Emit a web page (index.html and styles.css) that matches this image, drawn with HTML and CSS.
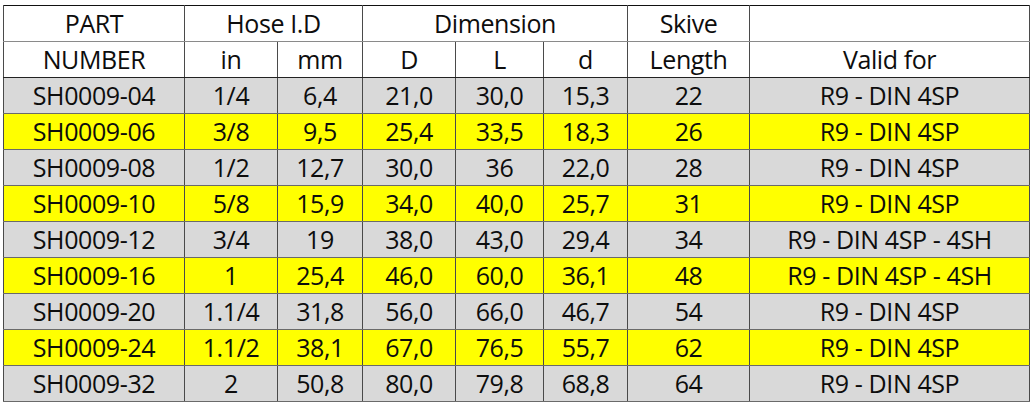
FILE: index.html
```html
<!DOCTYPE html>
<html lang="en">

<head>
    <meta charset="UTF-8">
    <title>SH0009 skive fittings</title>
    <link rel="stylesheet" href="styles.css">
</head>

<body>
    <table class="parts">
        <colgroup>
            <col class="c-part">
            <col class="c-in">
            <col class="c-mm">
            <col class="c-D">
            <col class="c-L">
            <col class="c-d">
            <col class="c-skive">
            <col class="c-valid">
        </colgroup>
        <thead>
            <tr>
                <th>PART</th>
                <th colspan="2">Hose I.D</th>
                <th colspan="3">Dimension</th>
                <th>Skive</th>
                <th></th>
            </tr>
            <tr class="head-last">
                <th>NUMBER</th>
                <th>in</th>
                <th>mm</th>
                <th>D</th>
                <th>L</th>
                <th>d</th>
                <th>Length</th>
                <th>Valid for</th>
            </tr>
        </thead>
        <tbody>
            <tr class="grey">
                <td>SH0009-04</td><td>1/4</td><td>6,4</td><td>21,0</td><td>30,0</td><td>15,3</td><td>22</td><td>R9 - DIN 4SP</td>
            </tr>
            <tr class="yellow">
                <td>SH0009-06</td><td>3/8</td><td>9,5</td><td>25,4</td><td>33,5</td><td>18,3</td><td>26</td><td>R9 - DIN 4SP</td>
            </tr>
            <tr class="grey">
                <td>SH0009-08</td><td>1/2</td><td>12,7</td><td>30,0</td><td>36</td><td>22,0</td><td>28</td><td>R9 - DIN 4SP</td>
            </tr>
            <tr class="yellow">
                <td>SH0009-10</td><td>5/8</td><td>15,9</td><td>34,0</td><td>40,0</td><td>25,7</td><td>31</td><td>R9 - DIN 4SP</td>
            </tr>
            <tr class="grey">
                <td>SH0009-12</td><td>3/4</td><td>19</td><td>38,0</td><td>43,0</td><td>29,4</td><td>34</td><td>R9 - DIN 4SP - 4SH</td>
            </tr>
            <tr class="yellow">
                <td>SH0009-16</td><td>1</td><td>25,4</td><td>46,0</td><td>60,0</td><td>36,1</td><td>48</td><td>R9 - DIN 4SP - 4SH</td>
            </tr>
            <tr class="grey">
                <td>SH0009-20</td><td>1.1/4</td><td>31,8</td><td>56,0</td><td>66,0</td><td>46,7</td><td>54</td><td>R9 - DIN 4SP</td>
            </tr>
            <tr class="yellow">
                <td>SH0009-24</td><td>1.1/2</td><td>38,1</td><td>67,0</td><td>76,5</td><td>55,7</td><td>62</td><td>R9 - DIN 4SP</td>
            </tr>
            <tr class="grey">
                <td>SH0009-32</td><td>2</td><td>50,8</td><td>80,0</td><td>79,8</td><td>68,8</td><td>64</td><td>R9 - DIN 4SP</td>
            </tr>
        </tbody>
    </table>
</body>

</html>
```

FILE: styles.css
```css
html {
    box-sizing: border-box;
    font-family: "Open Sans", sans-serif;
    font-size: 25px;
}

*,
*:before,
*:after {
    box-sizing: inherit;
}

body {
    margin: 0;
    padding: 5px 0 0 3px;
    background-color: #fff;
    color: #0d0d0d;
}

.parts {
    border-collapse: collapse;
    table-layout: fixed;
    width: 1026px;
    border: 1px solid #111;
}

.c-part { width: 181px; }
.c-in { width: 93px; }
.c-mm { width: 85px; }
.c-D { width: 93px; }
.c-L { width: 88px; }
.c-d { width: 84px; }
.c-skive { width: 122px; }
.c-valid { width: 280px; }

.parts tr {
    height: 36px;
}

.parts th,
.parts td {
    padding: 0;
    text-align: center;
    vertical-align: middle;
    font-weight: normal;
    line-height: 1;
    letter-spacing: -0.4px;
    white-space: nowrap;
    border-left: 1px solid #4a4a4a;
    border-right: 1px solid #4a4a4a;
    border-bottom: 1px solid #6a6a6a;
}

.parts thead tr:first-child th {
    border-bottom-color: #8a8a8a;
}

.parts .head-last th {
    border-bottom: 1px solid #222;
}

.grey {
    background-color: #d9d9d9;
}

.yellow {
    background-color: #ffff00;
}
```
